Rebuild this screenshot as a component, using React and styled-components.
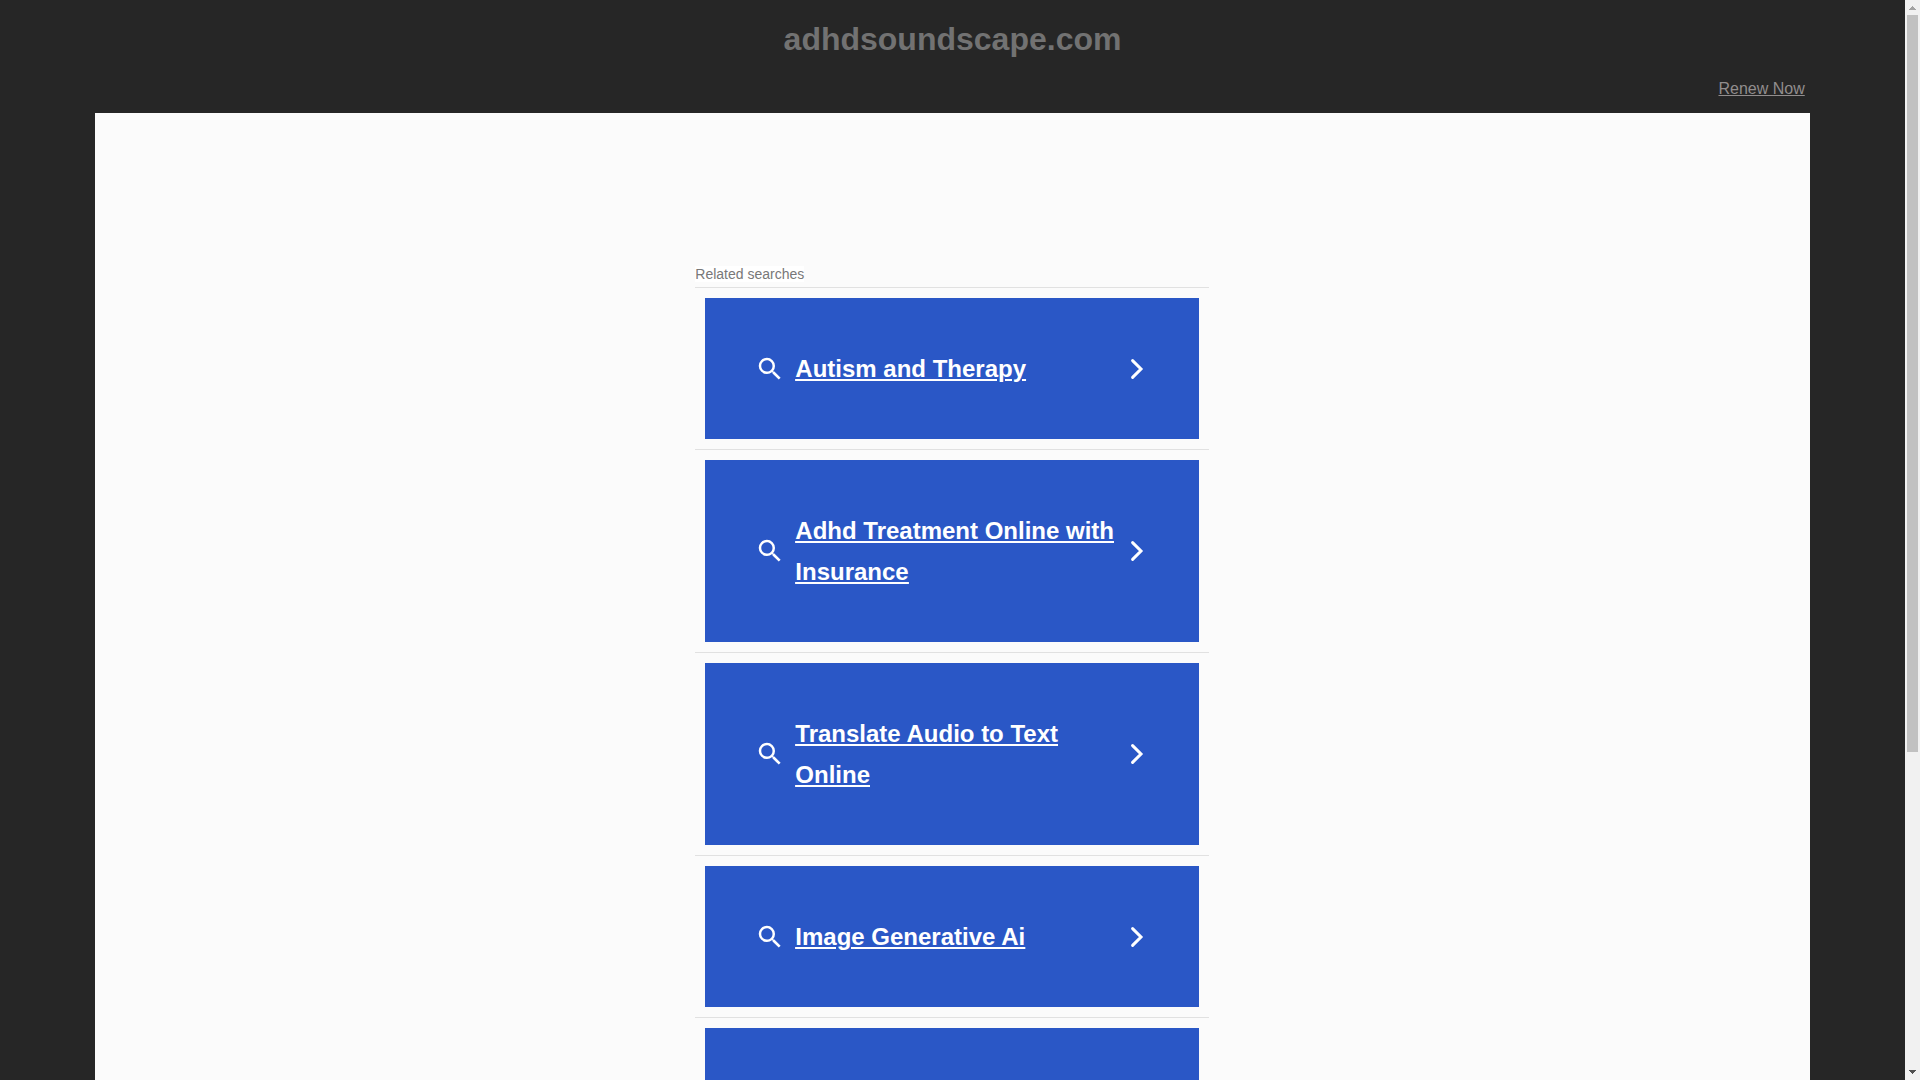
import styled, { createGlobalStyle } from "styled-components";

const searches = [
  "Autism and Therapy",
  "Adhd Treatment Online with Insurance",
  "Translate Audio to Text Online",
  "Image Generative Ai",
];

const SearchIcon = () => (
  <Icon $size={30} viewBox="0 0 24 24" aria-hidden="true">
    <path
      fill="currentColor"
      d="M15.5 14h-.79l-.28-.27A6.47 6.47 0 0 0 16 9.5 6.5 6.5 0 1 0 9.5 16c1.61 0 3.09-.59 4.23-1.57l.27.28v.79l5 4.99L20.49 19l-4.99-5zm-6 0C7.01 14 5 11.99 5 9.5S7.01 5 9.5 5 14 7.01 14 9.5 11.99 14 9.5 14z"
    />
  </Icon>
);

const ChevronIcon = () => (
  <Icon $size={24} viewBox="0 0 24 24" aria-hidden="true">
    <path
      d="M7.6 3.6 16 12l-8.4 8.4"
      fill="none"
      stroke="currentColor"
      strokeWidth="3"
      strokeLinecap="round"
    />
  </Icon>
);

const ScrollBar = () => (
  <Track aria-hidden="true">
    <Arrow viewBox="0 0 15 15">
      <path
        d="M7 6h1v1h1v1h1v1h1v1H4V9h1V8h1V7h1z"
        fill="#a3a3a3"
        shapeRendering="crispEdges"
      />
    </Arrow>
    <Rail>
      <Thumb />
    </Rail>
    <Arrow viewBox="0 0 15 15">
      <path
        d="M4 5h7v1h-1v1H9v1H8v1H7V8H6V7H5V6H4z"
        fill="#505050"
        shapeRendering="crispEdges"
      />
    </Arrow>
  </Track>
);

export default function App() {
  return (
    <Shell>
      <GlobalStyle />
      <Page>
        <Header>
          <h1>adhdsoundscape.com</h1>
          <RenewLink href="#renew">Renew Now</RenewLink>
        </Header>
        <Panel>
          <Related>
            <Heading>
              <span>Related searches</span>
            </Heading>
            {searches.map((title) => (
              <Item key={title}>
                <Card href="#search">
                  <SearchIcon />
                  <Title>{title}</Title>
                  <ChevronIcon />
                </Card>
              </Item>
            ))}
            <Item>
              <Card as="div" />
            </Item>
          </Related>
        </Panel>
      </Page>
      <ScrollBar />
    </Shell>
  );
}

const GlobalStyle = createGlobalStyle`
  * {
    box-sizing: border-box;
  }
  body {
    margin: 0;
    background: #262626;
    font-family: "Liberation Sans", Arial, sans-serif;
    font-size: 16px;
  }
`;
const Shell = styled.div`
  display: flex;
  height: 100vh;
  overflow: hidden;
`;
const Page = styled.div`
  flex: 1;
  min-width: 0;
  display: flex;
  flex-direction: column;
  align-items: center;
  overflow: hidden;
`;
const Header = styled.header`
  width: 90%;
  flex-shrink: 0;
  display: flex;
  flex-direction: column;
  padding: 21px 5px 15px;

  h1 {
    margin: 0 0 22px;
    color: #727272;
    font-size: 32px;
    line-height: 37px;
    text-align: center;
  }
`;
const RenewLink = styled.a`
  align-self: flex-end;
  color: #918d8d;
  line-height: 18px;
`;
const Panel = styled.main`
  width: 90%;
  flex-shrink: 0;
  padding-top: 153px;
  background: #fbfbfb;
`;
const Related = styled.section`
  max-width: 514px;
  margin: 0 35%;
`;
const Heading = styled.div`
  padding-bottom: 5px;
  color: #787878;
  font-size: 14px;
  line-height: 16px;

  span {
    background: #fff;
  }
`;
const Item = styled.div`
  padding: 10px;
  border-top: 1px solid #e1e1e1;
`;
const Card = styled.a`
  display: flex;
  align-items: center;
  gap: 10px;
  min-height: 141px;
  padding: 50px;
  color: #fff;
  background: #2a57c6;
`;
const Title = styled.span`
  flex: 1;
  font-size: 24px;
  font-weight: bold;
  line-height: 41px;
  text-decoration: underline;
`;
const Icon = styled.svg`
  flex-shrink: 0;
  width: ${({ $size }) => $size}px;
  height: ${({ $size }) => $size}px;
`;
const Track = styled.div`
  width: 15px;
  flex-shrink: 0;
  display: flex;
  flex-direction: column;
  background: #f1f1f1;
`;
const Arrow = styled.svg`
  display: block;
  width: 15px;
  height: 15px;
`;
const Rail = styled.div`
  flex: 1;
  padding: 0 2px;
`;
const Thumb = styled.div`
  height: 70.2%;
  background: #c1c1c1;
`;
